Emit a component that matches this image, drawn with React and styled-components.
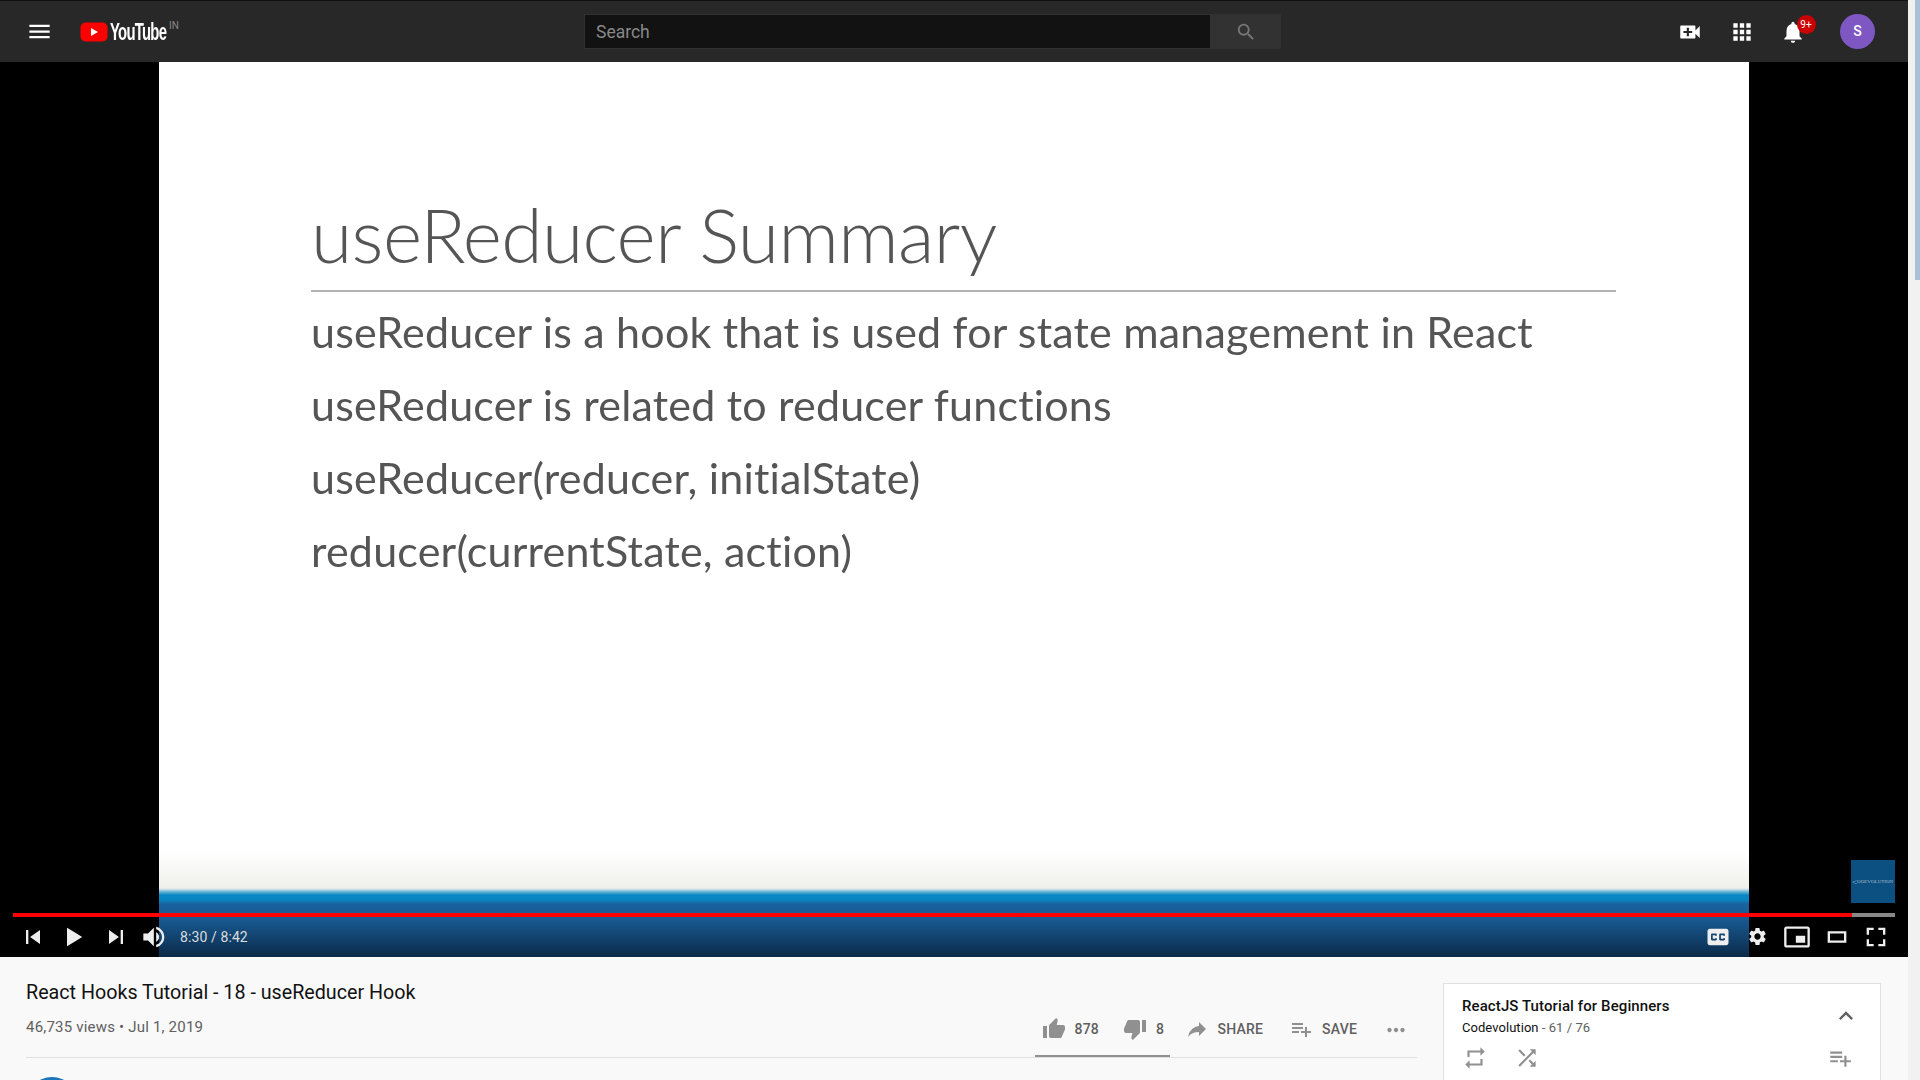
import React from "react";
import styled, { createGlobalStyle } from "styled-components";
import {
  MdMenu,
  MdSearch,
  MdVideoCall,
  MdApps,
  MdNotifications,
  MdSettings,
  MdThumbUp,
  MdThumbDown,
  MdReply,
  MdPlaylistAdd,
  MdMoreHoriz,
  MdExpandLess,
  MdRepeat,
  MdShuffle,
} from "react-icons/md";

const GlobalStyle = createGlobalStyle`
  html, body {
    margin: 0;
    height: 1080px;
    overflow: hidden;
    background: #f9f9f9;
    font-family: Roboto, "Liberation Sans", sans-serif;
  }
  * { box-sizing: border-box; }
`;

const slideLines = [
  "useReducer is a hook that is used for state management in React",
  "useReducer is related to reducer functions",
  "useReducer(reducer, initialState)",
  "reducer(currentState, action)",
];

const elapsed = 510;
const total = 522;

export default function App() {
  return (
    <Shell>
      <GlobalStyle />
      <Page>
        <Masthead>
          <MastLeft>
            <MdMenu size={27} color="#fff" />
            <Logo>
              <svg width="28" height="20" viewBox="0 0 28 20">
                <rect x="0.5" y="0.5" width="27" height="19" rx="5" fill="#f00" />
                <path d="M11 6v8l7-4z" fill="#fff" />
              </svg>
              <LogoWord>YouTube</LogoWord>
              <LogoRegion>IN</LogoRegion>
            </Logo>
          </MastLeft>
          <SearchBox>
            <SearchInput>Search</SearchInput>
            <SearchButton>
              <MdSearch size={22} color="#777" />
            </SearchButton>
          </SearchBox>
          <MastRight>
            <TopIcon>
              <MdVideoCall size={26} color="#fff" />
            </TopIcon>
            <TopIcon>
              <MdApps size={26} color="#fff" />
            </TopIcon>
            <TopIcon>
              <MdNotifications size={26} color="#fff" />
              <Badge>9+</Badge>
            </TopIcon>
            <Avatar>S</Avatar>
          </MastRight>
        </Masthead>

        <Player>
          <Slide>
            <SlideTitle>useReducer Summary</SlideTitle>
            <SlideRule />
            {slideLines.map((line) => (
              <SlideLine key={line}>{line}</SlideLine>
            ))}
          </Slide>
          <EndLogo>
            <span>&lt;</span>ODEVOLUTION
          </EndLogo>
          <Progress>
            <Played style={{ width: `${(elapsed / total) * 100}%` }} />
          </Progress>
          <Controls>
            <ControlGroup>
              <CtrlBtn>
                <CtrlSvg viewBox="0 0 36 36">
                  <path d="m12 12h2v12h-2z m3.5 6 8.5 6V12z" />
                </CtrlSvg>
              </CtrlBtn>
              <CtrlBtn>
                <CtrlSvg viewBox="0 0 36 36">
                  <path d="M12 26 18.5 22 18.5 14 12 10z M18.5 22 25 18 25 18 18.5 14z" />
                </CtrlSvg>
              </CtrlBtn>
              <CtrlBtn>
                <CtrlSvg viewBox="0 0 36 36">
                  <path d="M12 24 20.5 18 12 12V24z M22 12v12h2V12h-2z" />
                </CtrlSvg>
              </CtrlBtn>
              <VolumeBtn>
                <CtrlSvg viewBox="0 0 36 36">
                  <path d="M8 21 12 21 17 26 17 10 12 15 8 15 8 21Z M19 14 19 22C20.48 21.32 21.5 19.77 21.5 18C21.5 16.26 20.48 14.74 19 14Z M19 11.29C21.89 12.15 24 14.83 24 18C24 21.17 21.89 23.85 19 24.71L19 26.77C23.01 25.86 26 22.28 26 18C26 13.72 23.01 10.14 19 9.23L19 11.29Z" />
                </CtrlSvg>
              </VolumeBtn>
              <TimeText>8:30 / 8:42</TimeText>
            </ControlGroup>
            <ControlGroup>
              <SmallBtn>
                <CtrlSvg viewBox="0 0 36 36">
                  <path d="M11 11C9.89 11 9 11.9 9 13L9 23C9 24.1 9.89 25 11 25L25 25C26.1 25 27 24.1 27 23L27 13C27 11.9 26.1 11 25 11L11 11Z M17 17 15.5 17 15.5 16.5 13.5 16.5 13.5 19.5 15.5 19.5 15.5 19 17 19 17 20C17 20.55 16.55 21 16 21L13 21C12.45 21 12 20.55 12 20L12 16C12 15.45 12.45 15 13 15L16 15C16.55 15 17 15.45 17 16L17 17Z M24 17 22.5 17 22.5 16.5 20.5 16.5 20.5 19.5 22.5 19.5 22.5 19 24 19 24 20C24 20.55 23.55 21 23 21L20 21C19.45 21 19 20.55 19 20L19 16C19 15.45 19.45 15 20 15L23 15C23.55 15 24 15.45 24 16L24 17Z" />
                </CtrlSvg>
              </SmallBtn>
              <SmallBtn>
                <MdSettings size={21} color="#eee" />
              </SmallBtn>
              <SmallBtn>
                <CtrlSvg viewBox="0 0 36 36">
                  <path d="M25 17 17 17 17 23 25 23 25 17Z M29 25 29 10.98C29 9.88 28.1 9 27 9L9 9C7.9 9 7 9.88 7 10.98L7 25C7 26.1 7.9 27 9 27L27 27C28.1 27 29 26.1 29 25Z M27 25.02 9 25.02 9 10.97 27 10.97 27 25.02Z" fillRule="evenodd" />
                </CtrlSvg>
              </SmallBtn>
              <SmallBtn>
                <CtrlSvg viewBox="0 0 36 36">
                  <path d="m26 13 0 10-16 0 0-10z m-14 2 12 0 0 6-12 0 0-6z" fillRule="evenodd" />
                </CtrlSvg>
              </SmallBtn>
              <SmallBtn>
                <CtrlSvg viewBox="0 0 36 36">
                  <path d="m10 16 2 0 0-4 4 0 0-2L10 10l0 6z" />
                  <path d="m20 10 0 2 4 0 0 4 2 0L26 10l-6 0z" />
                  <path d="m24 24-4 0 0 2L26 26l0-6-2 0 0 4z" />
                  <path d="M12 20 10 20 10 26l6 0 0-2-4 0 0-4z" />
                </CtrlSvg>
              </SmallBtn>
            </ControlGroup>
          </Controls>
        </Player>

        <Below>
          <Primary>
            <VideoTitle>React Hooks Tutorial - 18 - useReducer Hook</VideoTitle>
            <StatsRow>
              <Views>46,735 views • Jul 1, 2019</Views>
              <Actions>
                <LikeGroup>
                  <Action>
                    <MdThumbUp size={24} color="#909090" />
                    878
                  </Action>
                  <Action>
                    <MdThumbDown size={24} color="#909090" />8
                  </Action>
                </LikeGroup>
                <Action>
                  <Flipped size={24} color="#909090" />
                  SHARE
                </Action>
                <Action>
                  <MdPlaylistAdd size={24} color="#909090" />
                  SAVE
                </Action>
                <MoreDots size={26} color="#909090" />
              </Actions>
            </StatsRow>
            <OwnerAvatar />
          </Primary>
          <PlaylistBox>
            <PlaylistHead>
              <div>
                <PlaylistTitle>ReactJS Tutorial for Beginners</PlaylistTitle>
                <PlaylistSub>
                  Codevolution <Muted>- 61 / 76</Muted>
                </PlaylistSub>
              </div>
              <Collapse size={28} color="#606060" />
            </PlaylistHead>
            <PlaylistTools>
              <ToolGroup>
                <MdRepeat size={26} color="#909090" />
                <MdShuffle size={26} color="#909090" />
              </ToolGroup>
              <MdPlaylistAdd size={26} color="#909090" />
            </PlaylistTools>
          </PlaylistBox>
        </Below>
      </Page>
      <Scrollbar>
        <ScrollThumb />
      </Scrollbar>
    </Shell>
  );
}

const Shell = styled.div`
  display: flex;
  width: 1920px;
  height: 1080px;
  overflow: hidden;
`;

const Page = styled.div`
  width: 1908px;
  display: flex;
  flex-direction: column;
`;

const Masthead = styled.header`
  height: 62px;
  flex: none;
  display: grid;
  grid-template-columns: 584px 697px 1fr;
  align-items: center;
  background: #282828;
  border-top: 1px solid #111;
`;

const MastLeft = styled.div`
  display: flex;
  align-items: center;
  gap: 27px;
  padding-left: 26px;
`;

const Logo = styled.div`
  display: flex;
  align-items: center;
  position: relative;
`;

const LogoWord = styled.span`
  display: inline-block;
  margin-left: 2px;
  width: 56px;
  font: 700 24px/22px "Liberation Sans", sans-serif;
  color: #fff;
  letter-spacing: -1.2px;
  white-space: nowrap;
  transform: scaleX(0.62);
  transform-origin: left center;
`;

const LogoRegion = styled.span`
  position: absolute;
  left: 89px;
  top: -1px;
  font-size: 10px;
  color: #888;
`;

const SearchBox = styled.div`
  display: flex;
  height: 35px;
  border: 1px solid #303030;
`;

const SearchInput = styled.div`
  flex: 1;
  padding-left: 11px;
  background: #121212;
  color: #888;
  font-size: 17.5px;
  line-height: 35px;
`;

const SearchButton = styled.div`
  width: 70px;
  padding-left: 2px;
  display: flex;
  align-items: center;
  justify-content: center;
  background: #323232;
`;

const MastRight = styled.div`
  display: flex;
  align-items: center;
  justify-content: flex-end;
  padding-right: 33px;
`;

const TopIcon = styled.div`
  position: relative;
  width: 51.5px;
  display: flex;
  justify-content: center;
`;

const Badge = styled.span`
  position: absolute;
  left: 29px;
  top: -4px;
  width: 19px;
  height: 19px;
  border-radius: 50%;
  background: #cc0000;
  color: #fff;
  font-size: 10px;
  line-height: 19px;
  text-align: center;
`;

const Avatar = styled.div`
  width: 35px;
  height: 35px;
  margin-left: 21px;
  border-radius: 50%;
  background: #7e57c2;
  color: #fff;
  font-size: 14px;
  font-weight: 500;
  line-height: 35px;
  text-align: center;
`;

const Player = styled.section`
  position: relative;
  height: 895px;
  flex: none;
  background: #000;
`;

const Slide = styled.div`
  width: 1590px;
  height: 100%;
  margin: 0 auto;
  padding: 130px 0 0 152px;
  font-family: Lato, "Open Sans", sans-serif;
  color: #555;
  background: linear-gradient(
    to bottom,
    #fff 0,
    #fff 790px,
    #efefeb 826px,
    #d6e6ec 827px,
    #5fb0d2 830px,
    #0a88c4 833px,
    #0a84c0 838px,
    #1a619f 842px,
    #185b94 856px,
    #0b2a48 895px
  );
`;

const SlideTitle = styled.h1`
  margin: 0;
  font-size: 75px;
  font-weight: 300;
  line-height: 84px;
  letter-spacing: -0.6px;
  white-space: nowrap;
  filter: blur(0.4px);
`;

const SlideRule = styled.div`
  width: 1305px;
  height: 2px;
  margin: 14px 0 3px;
  background: #b4b4b4;
`;

const SlideLine = styled.p`
  margin: 0;
  font-size: 43px;
  font-weight: 400;
  line-height: 73px;
  letter-spacing: 0.2px;
  white-space: nowrap;
  filter: blur(0.4px);
`;

const EndLogo = styled.div`
  position: absolute;
  left: 1851px;
  top: 798px;
  width: 44px;
  height: 43px;
  display: flex;
  align-items: center;
  padding-left: 1px;
  background: #0b5080;
  color: #a8bccb;
  font: 5px "Liberation Serif", serif;
  white-space: nowrap;
  overflow: hidden;

  span {
    font-size: 9px;
  }
`;

const Progress = styled.div`
  position: absolute;
  left: 13px;
  right: 13px;
  top: 851px;
  height: 4px;
  background: #888;
`;

const Played = styled.div`
  height: 100%;
  background: #f00;
`;

const Controls = styled.div`
  position: absolute;
  left: 0;
  right: 0;
  top: 854px;
  height: 41px;
  padding: 0 12px;
  display: flex;
  align-items: center;
  justify-content: space-between;
`;

const ControlGroup = styled.div`
  display: flex;
  align-items: center;
`;

const CtrlBtn = styled.div`
  width: 41.5px;
  height: 41px;
  flex: none;
  display: flex;
  align-items: center;
  justify-content: center;
`;

const VolumeBtn = styled(CtrlBtn)`
  margin-left: -2px;
`;

const SmallBtn = styled(CtrlBtn)`
  width: 39.5px;
`;

const CtrlSvg = styled.svg`
  width: 42px;
  height: 42px;
  flex: none;
  fill: #eee;
`;

const TimeText = styled.span`
  margin-left: 4px;
  font-size: 14px;
  letter-spacing: 0.1px;
  color: #ddd;
`;

const Below = styled.section`
  flex: 1;
  display: flex;
  gap: 26px;
  padding: 0 27px 0 26px;
  background: #f9f9f9;
`;

const Primary = styled.div`
  width: 1391px;
  flex: none;
`;

const VideoTitle = styled.h1`
  margin: 0;
  padding-top: 24px;
  font-size: 19.7px;
  font-weight: 400;
  line-height: 24px;
  color: #111;
`;

const StatsRow = styled.div`
  display: flex;
  justify-content: space-between;
  height: 45px;
  padding-right: 8px;
  margin-top: 8px;
  border-bottom: 1px solid #e0e0e0;
`;

const Views = styled.span`
  font-size: 15px;
  line-height: 20px;
  padding-top: 4px;
  letter-spacing: 0.2px;
  color: #606060;
`;

const Actions = styled.div`
  display: flex;
  align-items: flex-start;
  gap: 26px;
`;

const LikeGroup = styled.div`
  display: flex;
  gap: 24px;
  height: 44px;
  width: 135px;
  margin-right: -11px;
  padding-left: 7px;
  border-bottom: 2px solid #909090;
`;

const Action = styled.div`
  display: flex;
  align-items: center;
  gap: 9px;
  height: 28px;
  margin-top: 2px;
  color: #606060;
  font-size: 14px;
  font-weight: 500;
  letter-spacing: 0.2px;
`;

const Flipped = styled(MdReply)`
  transform: scaleX(-1);
`;

const MoreDots = styled(MdMoreHoriz)`
  margin-top: 4px;
`;

const OwnerAvatar = styled.div`
  width: 52px;
  height: 52px;
  margin-top: 19px;
  border-radius: 50%;
  background: #1976b8;
`;

const PlaylistBox = styled.aside`
  width: 438px;
  height: 130px;
  margin-top: 26px;
  padding: 12px 20px 0 18px;
  background: #fff;
  border: 1px solid #e0e0e0;
`;

const PlaylistHead = styled.div`
  display: flex;
  justify-content: space-between;
  align-items: flex-start;
`;

const Collapse = styled(MdExpandLess)`
  margin-top: 6px;
`;

const PlaylistTitle = styled.div`
  font-size: 15px;
  font-weight: 500;
  line-height: 20px;
  letter-spacing: 0.1px;
  color: #111;
`;

const PlaylistSub = styled.div`
  margin-top: 3px;
  font-size: 13px;
  line-height: 18px;
  letter-spacing: 0.05px;
  color: #111;
`;

const Muted = styled.span`
  color: #606060;
`;

const PlaylistTools = styled.div`
  display: flex;
  justify-content: space-between;
  align-items: center;
  margin-top: 8px;
  padding-right: 7px;
`;

const ToolGroup = styled.div`
  display: flex;
  gap: 26px;
`;

const Scrollbar = styled.div`
  flex: 1;
  padding-left: 7px;
  background: #f1f1f1;
`;

const ScrollThumb = styled.div`
  height: 280px;
  background: #a9c0d6;
`;
